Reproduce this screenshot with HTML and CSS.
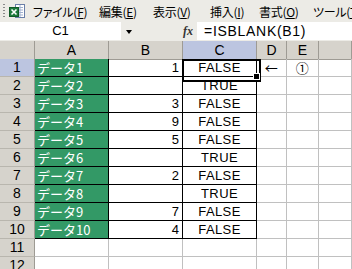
FILE: index.html
```html
<!DOCTYPE html>
<html lang="ja">
<head>
<meta charset="utf-8">
<link rel="stylesheet" href="styles.css">
</head>
<body>
<div class="menubar">
  <span class="grip"></span>
  <svg class="logo" width="16" height="15" viewBox="0 0 16 15">
    <rect x="6.5" y="0.5" width="9" height="13" fill="#fff" stroke="#6a7fa8"/>
    <path d="M8 3.5h6M8 6h6M8 8.5h6M8 11h6M11 1v12" stroke="#9fb0cf" stroke-width="1"/>
    <rect x="0.5" y="3.5" width="9" height="9" fill="#1e7b3c" stroke="#0f5a26"/>
    <path d="M2.5 5.5l5 5M7.5 5.5l-5 5" stroke="#fff" stroke-width="1.6"/>
  </svg>
  <nav class="menu">
    <span class="mi mi-file">ファイル(<u>F</u>)</span>
    <span class="mi mi-edit">編集(<u>E</u>)</span>
    <span class="mi mi-view">表示(<u>V</u>)</span>
    <span class="mi mi-ins">挿入(<u>I</u>)</span>
    <span class="mi mi-fmt">書式(<u>O</u>)</span>
    <span class="mi">ツール(<u>T</u>)</span>
  </nav>
</div>
<div class="formulabar">
  <div class="namebox">C1</div>
  <div class="dd"><span class="tri"></span></div>
  <div class="fx">fx</div>
  <div class="finput">=ISBLANK(B1)</div>
</div>
<div class="sheet">
  <div class="hd corner"></div><div class="hd">A</div><div class="hd">B</div><div class="hd sel">C</div><div class="hd">D</div><div class="hd">E</div><div class="hd"></div>

  <div class="rh sel">1</div><div class="c g bx">データ1</div><div class="c bx num">1</div><div class="c bx ctr active">FALSE</div><div class="c ctr sym">←</div><div class="c ctr sym">①</div><div class="c"></div>
  <div class="rh">2</div><div class="c g bx">データ2</div><div class="c bx num"></div><div class="c bx ctr">TRUE</div><div class="c"></div><div class="c"></div><div class="c"></div>
  <div class="rh">3</div><div class="c g bx">データ3</div><div class="c bx num">3</div><div class="c bx ctr">FALSE</div><div class="c"></div><div class="c"></div><div class="c"></div>
  <div class="rh">4</div><div class="c g bx">データ4</div><div class="c bx num">9</div><div class="c bx ctr">FALSE</div><div class="c"></div><div class="c"></div><div class="c"></div>
  <div class="rh">5</div><div class="c g bx">データ5</div><div class="c bx num">5</div><div class="c bx ctr">FALSE</div><div class="c"></div><div class="c"></div><div class="c"></div>
  <div class="rh">6</div><div class="c g bx">データ6</div><div class="c bx num"></div><div class="c bx ctr">TRUE</div><div class="c"></div><div class="c"></div><div class="c"></div>
  <div class="rh">7</div><div class="c g bx">データ7</div><div class="c bx num">2</div><div class="c bx ctr">FALSE</div><div class="c"></div><div class="c"></div><div class="c"></div>
  <div class="rh">8</div><div class="c g bx">データ8</div><div class="c bx num"></div><div class="c bx ctr">TRUE</div><div class="c"></div><div class="c"></div><div class="c"></div>
  <div class="rh">9</div><div class="c g bx">データ9</div><div class="c bx num">7</div><div class="c bx ctr">FALSE</div><div class="c"></div><div class="c"></div><div class="c"></div>
  <div class="rh">10</div><div class="c g bx">データ10</div><div class="c bx num">4</div><div class="c bx ctr">FALSE</div><div class="c"></div><div class="c"></div><div class="c"></div>
  <div class="rh">11</div><div class="c"></div><div class="c"></div><div class="c"></div><div class="c"></div><div class="c"></div><div class="c"></div>
  <div class="rh">12</div><div class="c"></div><div class="c"></div><div class="c"></div><div class="c"></div><div class="c"></div><div class="c"></div>
</div>
</body>
</html>
```
FILE: styles.css
```css
* { box-sizing: border-box; }
body {
  margin: 0;
  width: 352px;
  height: 269px;
  overflow: hidden;
  background: #fff;
  font-family: "Liberation Sans", "Noto Sans CJK JP", sans-serif;
  color: #000;
}
.menubar {
  height: 22px;
  display: flex;
  align-items: center;
  background: #ecebe6;
  font-family: "Noto Sans CJK JP", sans-serif;
  font-size: 12px;
  font-feature-settings: "palt";
  white-space: nowrap;
  overflow: hidden;
}
.menubar > * { flex-shrink: 0; }
.grip {
  width: 2px;
  height: 14px;
  margin-left: 3px;
  background: repeating-linear-gradient(#8a8a8a 0 1px, transparent 1px 3px);
}
.logo { margin-left: 4px; display: block; }
.menu { display: flex; margin-left: 8px; }
.mi { flex-shrink: 0; letter-spacing: -0.3px; }
.mi-file { width: 66px; }
.mi-edit { width: 54px; }
.mi-view { width: 57px; }
.mi-ins { width: 49px; }
.mi-fmt { width: 54px; }
.mi u { text-decoration-thickness: 1px; text-underline-offset: 1px; }

.formulabar {
  height: 19px;
  display: flex;
  background: #ecebe6;
}
.namebox {
  width: 121px;
  height: 18px;
  background: #fff;
  text-align: center;
  font-size: 13px;
  line-height: 18px;
}
.dd {
  width: 16px;
  height: 18px;
  display: flex;
  align-items: center;
  justify-content: center;
}
.tri {
  width: 0;
  height: 0;
  border-left: 3.5px solid transparent;
  border-right: 3.5px solid transparent;
  border-top: 4px solid #000;
  margin-top: 2px;
}
.fx {
  margin-left: 46px;
  width: 14px;
  font-family: "Liberation Serif", serif;
  font-style: italic;
  font-weight: bold;
  font-size: 12px;
  line-height: 18px;
  color: #333;
}
.finput {
  flex: 1;
  height: 18px;
  background: #fff;
  padding-left: 7px;
  font-size: 14px;
  letter-spacing: 0.7px;
  line-height: 18px;
  white-space: nowrap;
}

.sheet {
  display: grid;
  grid-template-columns: 35px 74px 74px 74px 30px 32px 1fr;
  grid-auto-rows: 18px;
  font-size: 13px;
}
.hd {
  height: 19px;
  background: #d6d3cc;
  border-right: 1px solid #9e9b94;
  border-bottom: 1px solid #9e9b94;
  text-align: center;
  line-height: 18px;
  font-size: 14px;
}
.hd.sel, .rh.sel { background: #bcc5e0; }
.rh {
  background: #d6d3cc;
  border-right: 1px solid #9e9b94;
  border-bottom: 1px solid #b9b6ae;
  text-align: center;
  line-height: 17px;
  font-size: 14px;
}
.c {
  position: relative;
  border-right: 1px solid #c0c0c0;
  border-bottom: 1px solid #c0c0c0;
  line-height: 17px;
  white-space: nowrap;
  overflow: visible;
}
.c.bx { border-color: #000; }
.c.g {
  background: #339966;
  color: #fff;
  padding-left: 2px;
  font-family: "Noto Sans CJK JP", sans-serif;
  font-size: 13px;
}
.sym { font-family: "Noto Sans CJK JP", sans-serif; }
.num { text-align: right; padding-right: 3px; }
.ctr { text-align: center; letter-spacing: 0.4px; }
.active::before {
  content: "";
  position: absolute;
  left: -1px;
  top: 0;
  width: 75px;
  height: 19px;
  border: 2px solid #000;
  z-index: 1;
}
.active::after {
  content: "";
  position: absolute;
  left: 71px;
  top: 15px;
  width: 5px;
  height: 5px;
  background: #000;
  box-shadow: 0 0 0 1px #fff;
  z-index: 2;
}
```
